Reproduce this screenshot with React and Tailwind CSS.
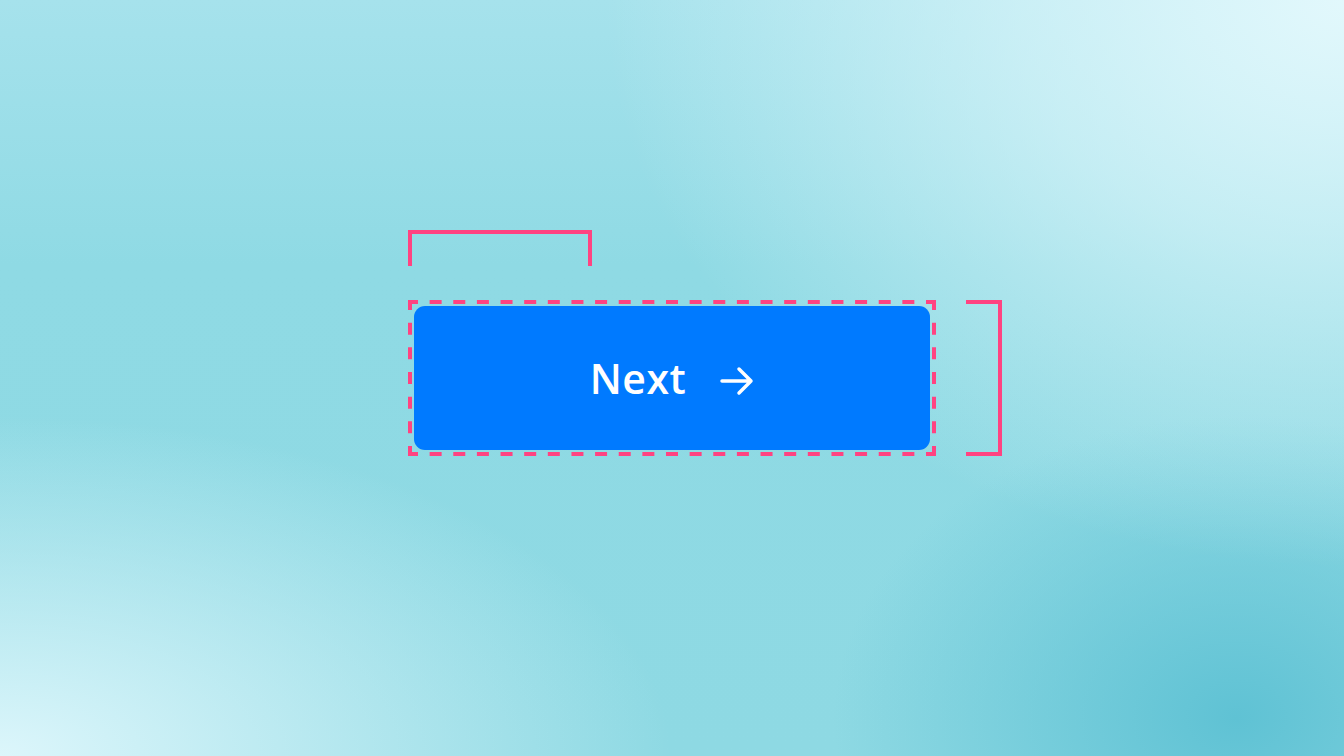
export default function App() {
  return (
    <div className="relative h-[756px] w-full overflow-hidden bg-[radial-gradient(ellipse_55%_75%_at_100%_0%,#e2f8fc_0%,rgba(226,248,252,0.6)_45%,rgba(226,248,252,0)_100%),radial-gradient(ellipse_50%_45%_at_0%_100%,#dcf6fb_0%,rgba(220,246,251,0.5)_50%,rgba(220,246,251,0)_100%),radial-gradient(ellipse_30%_40%_at_92%_95%,#5fc2d4_0%,rgba(95,194,212,0.5)_50%,rgba(95,194,212,0)_100%),linear-gradient(180deg,#a6e2ec_0%,#8fdae4_35%,#8ed9e3_100%)] font-['Open_Sans',sans-serif]">
      <div className="flex flex-col pl-[408px] pt-[230px]">
        {/* top bracket */}
        <div className="h-[36px] w-[184px] border-x-4 border-t-4 border-[#ff4381]"></div>

        <div className="mt-[34px] flex items-start">
          {/* selection box */}
          <div className="relative h-[156px] w-[528px] p-[6px]">
            <svg width="528" height="156" viewBox="0 0 528 156" className="absolute inset-0" fill="none">
              <g stroke="#ff4381" strokeWidth="4">
                <line x1="0" y1="2" x2="528" y2="2" strokeDasharray="12 11.636" strokeDashoffset="2" />
                <line x1="0" y1="154" x2="528" y2="154" strokeDasharray="12 11.636" strokeDashoffset="2" />
                <line x1="2" y1="0" x2="2" y2="156" strokeDasharray="12 12.667" strokeDashoffset="2" />
                <line x1="526" y1="0" x2="526" y2="156" strokeDasharray="12 12.667" strokeDashoffset="2" />
              </g>
            </svg>
            <button className="flex h-full w-full items-center justify-center gap-[34px] rounded-[11px] bg-[#007aff] text-white">
              <span className="text-[41px] font-semibold leading-none tracking-[0.5px]">Next</span>
              <svg width="34" height="30" viewBox="0 0 34 30" fill="none" className="mt-[5px]">
                <path d="M2 15H31M19 3L31 15L19 27" stroke="white" strokeWidth="3.5" strokeLinecap="round" strokeLinejoin="round" />
              </svg>
            </button>
          </div>

          {/* right bracket */}
          <div className="ml-[30px] h-[156px] w-[36px] border-y-4 border-r-4 border-[#ff4381]"></div>
        </div>
      </div>
    </div>
  );
}
